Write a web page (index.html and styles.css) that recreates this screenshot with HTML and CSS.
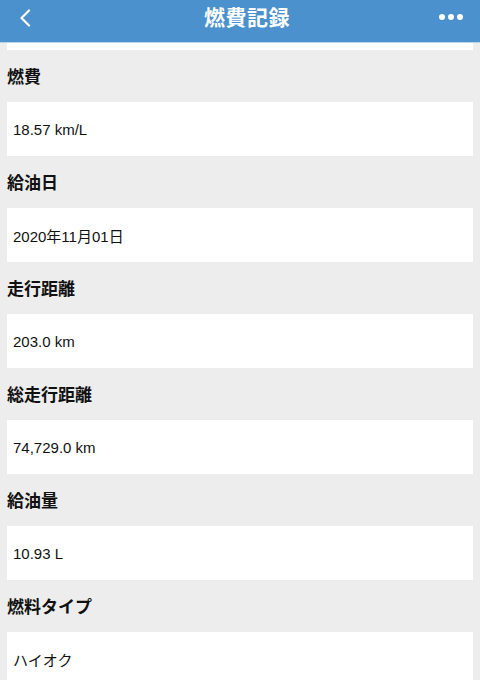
FILE: index.html
```html
<!DOCTYPE html>
<html lang="ja">
<head>
    <meta charset="UTF-8">
    <meta name="viewport" content="width=device-width, initial-scale=1.0">
    <title>燃費記録</title>

    <link rel="stylesheet" href="styles.css">
</head>
<body>
    <div class="header">
        <a class="back" href="#">
            <svg width="12" height="18" viewBox="0 0 12 18">
                <path d="M10 1.5 L2.5 9 L10 16.5" fill="none" stroke="#fff" stroke-width="2.2" stroke-linecap="round" stroke-linejoin="round"/>
            </svg>
        </a>
        <h1 class="title">燃費記録</h1>
        <div class="more">
            <span></span><span></span><span></span>
        </div>
    </div>

    <div id="wrap">
        <div class="card card_top"></div>

        <p class="label">燃費</p>
        <div class="card">18.57 km/L</div>

        <p class="label">給油日</p>
        <div class="card">2020年11月01日</div>

        <p class="label">走行距離</p>
        <div class="card">203.0 km</div>

        <p class="label">総走行距離</p>
        <div class="card">74,729.0 km</div>

        <p class="label">給油量</p>
        <div class="card">10.93 L</div>

        <p class="label">燃料タイプ</p>
        <div class="card">ハイオク</div>
    </div>
</body>
</html>
```

FILE: styles.css
```css
* {
    margin: 0;
    padding: 0;
    box-sizing: border-box;
}

html, body {
    width: 100%;
    height: 100%;
    background-color: #ededed;
    color: #111;
    font-family: 'Liberation Sans', Arial, 'Noto Sans CJK JP', sans-serif;
    overflow: hidden;
}

a {
    text-decoration: none;
    color: inherit;
}

.header {
    height: 43px;
    display: flex;
    justify-content: space-between;
    align-items: center;
    background-color: #4a91cd;
    color: #fff;
    padding: 0 17px 0 19px;
    border-bottom: 1px solid #b9d3ea;
}

.back {
    display: flex;
    width: 24px;
    margin-top: -7px;
}

.title {
    font-size: 21px;
    font-weight: bold;
    letter-spacing: 0.5px;
    margin-top: -11px;
    margin-left: 12px;
}

.more {
    display: flex;
    gap: 3px;
    width: 24px;
    margin-top: -9px;
}

.more span {
    width: 6px;
    height: 6px;
    border-radius: 50%;
    background-color: #fff;
}

#wrap {
    padding: 0 7px;
}

.card {
    height: 54px;
    display: flex;
    align-items: center;
    padding-left: 6px;
    background-color: #fff;
    font-size: 15px;
}

.card_top {
    height: 7px;
}

.label {
    height: 52px;
    display: flex;
    align-items: center;
    font-size: 17px;
    font-weight: bold;
    padding-bottom: 1px;
}
```
